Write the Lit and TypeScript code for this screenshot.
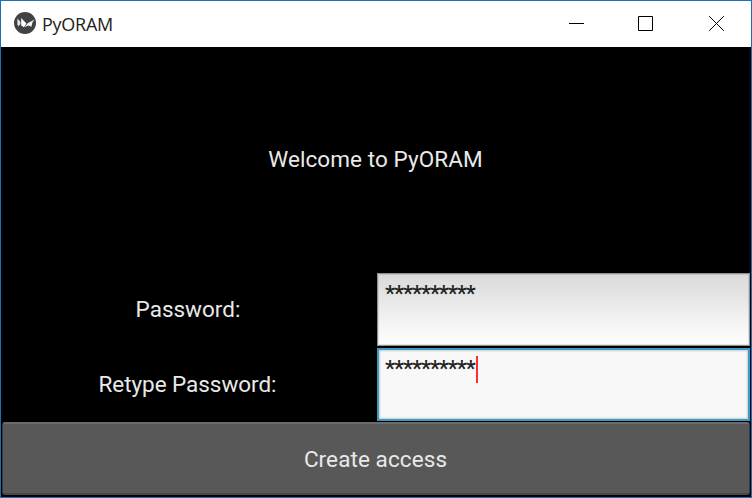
import { LitElement, html, css } from "lit";
import { customElement, property } from "lit/decorators.js";

@customElement("title-bar")
class TitleBar extends LitElement {
  static styles = css`
    :host { display: flex; height: 46px; background: #fff; color: #222; align-items: center; }
    .logo { width: 22px; height: 22px; margin-left: 13px; margin-top: -2px; flex: none; }
    .title { margin-left: 6px; font: 400 18px/24px "Open Sans", sans-serif; letter-spacing: -0.25px; flex: 1; white-space: nowrap; }
    .controls { display: flex; height: 46px; }
    .control { display: block; width: 70px; height: 46px; }
    svg { display: block; }
  `;
  @property() name = "";
  render() {
    return html`
      <svg class="logo" viewBox="0 0 22 22">
        <circle cx="11" cy="11" r="11" fill="#404244" />
        <path d="M3.4 6.4 6.4 9.8V12L4.6 14.2 3.4 12.4Z" fill="#e8e8e8" />
        <path d="M7.2 6 12.4 11.4 10 15.2 7.2 13.6Z" fill="#fff" />
        <path d="M10.6 15.2 13.6 11.2 20.6 7.6 18.4 10.6 17.4 14.8 14.2 13.4Z" fill="#f4f4f4" />
      </svg>
      <span class="title">${this.name}</span>
      <div class="controls">
        <svg class="control" viewBox="0 0 70 46"><path d="M28 22.5h15" stroke="#000" /></svg>
        <svg class="control" viewBox="0 0 70 46"><path d="M27.5 15.5h14v14h-14z" fill="none" stroke="#000" /></svg>
        <svg class="control" viewBox="0 0 70 46"><path d="M28.2 15.2l14.6 14.6m0-14.6l-14.6 14.6" stroke="#000" stroke-width="1" /></svg>
      </div>
    `;
  }
}

@customElement("password-field")
class PasswordField extends LitElement {
  static properties = { focused: { type: Boolean, reflect: true } };
  static styles = css`
    :host { display: block; box-sizing: border-box; height: 73px; margin: 1px; padding: 7px;
      border: 1px solid #8f8f8f; background: linear-gradient(#dadada, #fff); box-shadow: inset 0 0 1px 1px #0000001c; }
    :host([focused]) { border: 2px solid #3a9cc4; padding: 6px 6px; background: #f8f8f8; box-shadow: inset 0 0 2px 1px #ccc; }
    .line { display: flex; height: 27px; align-items: center; }
    .mask { font: 500 22.5px/27px Roboto, sans-serif; color: #222; width: 90px; letter-spacing: -1px; position: relative; top: -1px; }
    .caret { width: 2px; height: 27px; background: #ff2d2d; margin-left: 1px; }
  `;
  declare focused: boolean;
  render() {
    return html`<div class="line">
      <span class="mask">**********</span>${this.focused ? html`<span class="caret"></span>` : null}
    </div>`;
  }
}

@customElement("app-root")
class AppRoot extends LitElement {
  static styles = css`
    :host { display: block; box-sizing: border-box; width: 752px; height: 498px; border: 1px solid #1a70b8;
      background: #000; overflow: hidden; }
    .content { display: grid; height: 450px; grid-template: 225px 75px 75px 75px / 375px 375px;
      font: 22.5px/27px Roboto, sans-serif; color: #e9e9e9; }
    .label { display: flex; align-items: center; justify-content: center; white-space: nowrap; padding-right: 1px; }
    .wide { grid-column: 1 / 3; letter-spacing: 0.09px; }
    .long { letter-spacing: -0.05px; padding-right: 2px; }
    .button { box-sizing: border-box; margin: 0 1px 2px; padding-top: 2px; border: 1px solid #3c3c3c;
      border-top: 2px solid #6b6b6b; border-bottom: 2px solid #474747; border-radius: 3px; background: #585858; }
  `;
  render() {
    return html`
      <title-bar name="PyORAM"></title-bar>
      <div class="content">
        <div class="label wide">Welcome to PyORAM</div>
        <div class="label">Password:</div>
        <password-field></password-field>
        <div class="label long">Retype Password:</div>
        <password-field focused></password-field>
        <div class="label wide button">Create access</div>
      </div>
    `;
  }
}
